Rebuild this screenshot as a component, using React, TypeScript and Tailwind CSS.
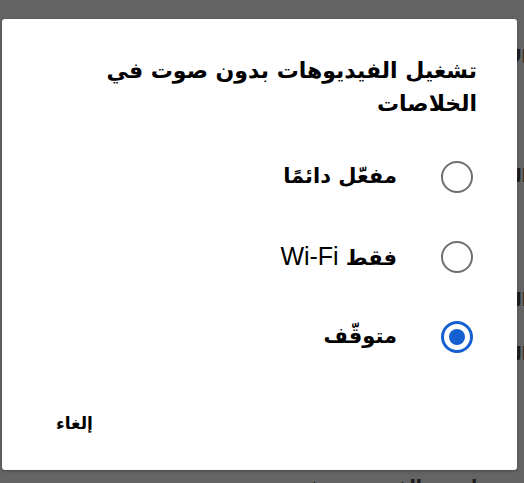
import React from 'react';

const options = [
  { id: 'always', label: 'مفعّل دائمًا' },
  { id: 'wifi', label: 'فقط', latin: 'Wi-Fi' },
  { id: 'off', label: 'متوقّف' },
];

const Radio: React.FC<{ checked: boolean }> = ({ checked }) =>
  checked ? (
    <span className="flex h-[32px] w-[32px] items-center justify-center rounded-full border-[3px] border-[#1560d0]">
      <span className="h-[16px] w-[16px] rounded-full bg-[#1560d0]" />
    </span>
  ) : (
    <span className="h-[32px] w-[32px] rounded-full border-[2.5px] border-[#6e6e6e]" />
  );

const App: React.FC = () => {
  const selected = 'off';

  return (
    <div className="relative h-[483px] w-[524px] overflow-hidden bg-[#646464]" style={{ fontFamily: '"DejaVu Sans", sans-serif' }}>
      {/* page behind the overlay */}
      <div dir="rtl" className="flex flex-col pt-[45px] text-[18px] font-bold leading-[24px] text-[#1c1c1c]">
        <div className="-mr-[4px]">الإعدادات</div>
        <div className="-mr-[4px] mt-[95px]">الحساب</div>
        <div className="-mr-[4px] mt-[100px]">التشغيل</div>
        <div className="-mr-[4px] mt-[30px]">العرض</div>
      </div>
      <div dir="rtl" className="absolute bottom-[-17px] right-[14px] flex gap-[40px] text-[18px] font-bold text-[#1c1c1c]">
        <span>تنزيل</span>
        <span>الفيديو</span>
        <span>في</span>
        <span>عرض</span>
      </div>

      {/* dialog */}
      <div
        dir="rtl"
        className="absolute left-[2px] top-[19px] flex h-[451px] w-[515px] flex-col rounded-[3px] bg-white px-[40px] pt-[35px] shadow-[0_1px_3px_rgba(0,0,0,0.3)]"
      >
        <h2 className="pl-[20px] text-[22px] font-bold leading-[33px] text-black">
          تشغيل الفيديوهات بدون صوت في الخلاصات
        </h2>

        <div className="mt-[17px] flex flex-col">
          {options.map((o) => (
            <label key={o.id} className="mr-[4px] flex h-[80px] items-center gap-[44px]">
              <Radio checked={o.id === selected} />
              <span className="text-[21px] font-bold text-black">
                {o.label}
                {o.latin && (
                  <span className="text-[25px] font-normal" style={{ fontFamily: '"Liberation Sans", sans-serif' }}>
                    {' '}
                    {o.latin}
                  </span>
                )}
              </span>
            </label>
          ))}
        </div>

        <div className="mt-[27px] flex justify-end">
          <button className="h-[40px] px-[14px] text-[17px] font-bold text-black">إلغاء</button>
        </div>
      </div>
    </div>
  );
};

export default App;
